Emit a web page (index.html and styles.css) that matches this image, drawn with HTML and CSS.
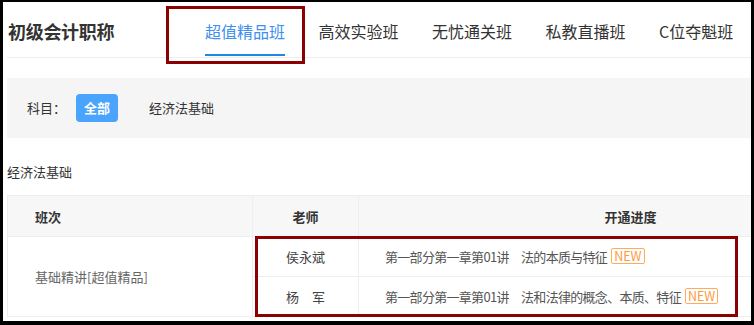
FILE: index.html
```html
<!DOCTYPE html>
<html lang="zh-CN">
<head>
<meta charset="utf-8">
<title>初级会计职称</title>
<link rel="stylesheet" href="styles.css">
</head>
<body>
<div class="frame">
  <div class="inner">
    <header class="header">
      <h1 class="title">初级会计职称</h1>
      <nav class="tabs">
        <span class="tab active">超值精品班</span>
        <span class="tab">高效实验班</span>
        <span class="tab">无忧通关班</span>
        <span class="tab">私教直播班</span>
        <span class="tab">C位夺魁班</span>
      </nav>
    </header>

    <div class="filter">
      <span class="label">科目：</span>
      <span class="opt on">全部</span>
      <span class="opt">经济法基础</span>
    </div>

    <div class="section">经济法基础</div>

    <table class="grid">
      <colgroup>
        <col class="c1"><col class="c2"><col class="c3">
      </colgroup>
      <thead>
        <tr><th class="left">班次</th><th>老师</th><th>开通进度</th></tr>
      </thead>
      <tbody>
        <tr>
          <td class="left" rowspan="2">基础精讲[超值精品]</td>
          <td class="teacher">侯永斌</td>
          <td class="prog">第一部分第一章第01讲　法的本质与特征<span class="new">NEW</span></td>
        </tr>
        <tr>
          <td class="teacher">杨　军</td>
          <td class="prog">第一部分第一章第01讲　法和法律的概念、本质、特征<span class="new">NEW</span></td>
        </tr>
      </tbody>
    </table>
  </div>
</div>
<div class="mark mark-tab"></div>
<div class="mark mark-rows"></div>
</body>
</html>
```

FILE: styles.css
```css
* { box-sizing: border-box; }
html, body { margin: 0; padding: 0; }
body {
  background: #000;
  width: 754px;
  height: 325px;
  overflow: hidden;
  position: relative;
  font-family: "Noto Sans CJK SC", "Liberation Sans", sans-serif;
  color: #333;
}
.frame {
  position: relative;
  margin: 2px 0 0 3px;
  width: 748px;
  height: 319px;
  background: #fff;
  overflow: hidden;
}
.inner {
  width: 900px;
  padding-left: 4px;
}
.header {
  height: 56px;
  display: flex;
  align-items: center;
  padding-top: 3px;
  border-bottom: 1px solid #eeeeee;
}
.title {
  margin: 0 0 0 1px;
  width: 197px;
  font-size: 18px;
  font-weight: 700;
  line-height: 24px;
  color: #333;
  letter-spacing: -0.3px;
}
.tabs {
  display: flex;
  gap: 33.5px;
  height: 100%;
  align-items: center;
}
.tab {
  position: relative;
  font-size: 16px;
  line-height: 22px;
  color: #333;
}
.tab.active { color: #3d8ff0; }
.tab.active::after {
  content: "";
  position: absolute;
  left: 0;
  right: 0;
  top: 34px;
  height: 2px;
  background: #1e88e5;
}
.filter {
  margin-top: 20px;
  height: 60px;
  background: #f5f5f5;
  display: flex;
  align-items: center;
  padding-left: 20px;
  font-size: 13px;
  color: #333;
}
.label { line-height: 18px; }
.opt {
  line-height: 28px;
  padding: 0 8px;
  border-radius: 4px;
}
.opt.on {
  margin-left: 10px;
  background: #4aa3fc;
  color: #fff;
  font-weight: 700;
}
.opt + .opt { margin-left: 31px; padding: 0; }
.section {
  margin-top: 24px;
  margin-bottom: 13px;
  font-size: 13px;
  line-height: 20px;
  color: #333;
}
.grid {
  width: 895px;
  border-collapse: collapse;
  font-size: 13px;
  table-layout: fixed;
}
.c1 { width: 245px; }
.c2 { width: 106px; }
.c3 { width: 544px; }
.grid th, .grid td {
  border: 1px solid #eeeeee;
  padding: 0;
  text-align: center;
}
.grid th {
  height: 41px;
  background: #f7f7f7;
  font-weight: 700;
  color: #333;
}
.grid td {
  height: 40px;
  color: #555;
}
.grid .left { text-align: left; padding-left: 27px; }
.grid td.left { color: #666; }
.grid .teacher { color: #444; }
.grid .prog {
  text-align: left;
  padding-left: 26px;
  color: #555;
  letter-spacing: -0.7px;
}
.new {
  display: inline-block;
  margin-left: 4px;
  padding: 0 2px;
  border: 1px solid #ffab5c;
  border-radius: 2px;
  color: #ff9a3c;
  font-size: 12.5px;
  line-height: 14px;
  letter-spacing: 0;
  vertical-align: 1px;
}
.mark {
  position: absolute;
  border: 3px solid #8b0000;
}
.mark-tab { left: 166px; top: 6px; width: 139px; height: 58px; }
.mark-rows { left: 255px; top: 236px; width: 483px; height: 81px; }
```
